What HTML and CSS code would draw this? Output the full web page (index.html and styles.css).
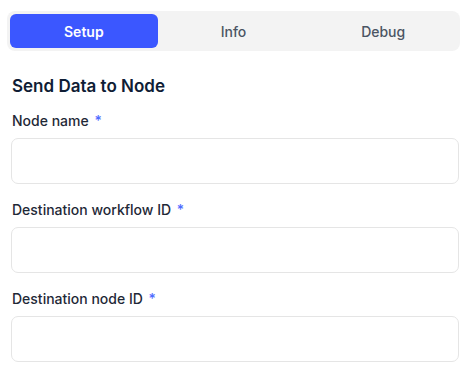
FILE: index.html
```html
<!DOCTYPE html>
<html lang="en">
<head>
    <meta charset="UTF-8">
    <meta name="viewport" content="width=device-width, initial-scale=1.0">
    <title>Send Data to Node</title>
    <link rel="stylesheet" href="styles.css">
</head>
<body>
    <div class="panel">
        <div class="tabs">
            <button class="tab active">Setup</button>
            <button class="tab">Info</button>
            <button class="tab">Debug</button>
        </div>

        <h2 class="title">Send Data to Node</h2>

        <div class="field">
            <label for="node_name">Node name <span class="req">*</span></label>
            <input type="text" id="node_name" name="node_name">
        </div>
        <div class="field">
            <label for="workflow_id">Destination workflow ID <span class="req">*</span></label>
            <input type="text" id="workflow_id" name="workflow_id">
        </div>
        <div class="field">
            <label for="node_id">Destination node ID <span class="req">*</span></label>
            <input type="text" id="node_id" name="node_id">
        </div>
    </div>
</body>
</html>
```
FILE: styles.css
```css
body {
    margin: 0;
    font-family: Inter, "Noto Sans", sans-serif;
    background: #fff;
    color: #1f2937;
}
.panel {
    padding: 11px 14px 0 7px;
}
.tabs {
    display: flex;
    gap: 2px;
    padding: 3px;
    background-color: #f3f3f3;
    border-radius: 8px;
}
.tab {
    flex: 1;
    height: 34px;
    border: none;
    border-radius: 6px;
    background: transparent;
    font-family: inherit;
    font-size: 14px;
    font-weight: 500;
    color: #4b5563;
}
.tab.active {
    background-color: #3b57ff;
    color: #fff;
    font-weight: 600;
}
.title {
    margin: 24px 0 14px 5px;
    font-size: 17px;
    line-height: 22px;
    font-weight: 600;
    color: #0f1d35;
}
.field {
    margin: 0 1px 16px 4px;
}
label {
    display: block;
    margin: 0 0 7px 1px;
    font-size: 14px;
    line-height: 20px;
    font-weight: 500;
    color: #1f2937;
}
.req {
    margin-left: 2px;
    color: #4f6bff;
}
input[type="text"] {
    display: block;
    width: 100%;
    height: 46px;
    border: 1px solid #e5e5e5;
    border-radius: 7px;
    box-sizing: border-box;
    padding: 0 12px;
    font-size: 14px;
}
```
